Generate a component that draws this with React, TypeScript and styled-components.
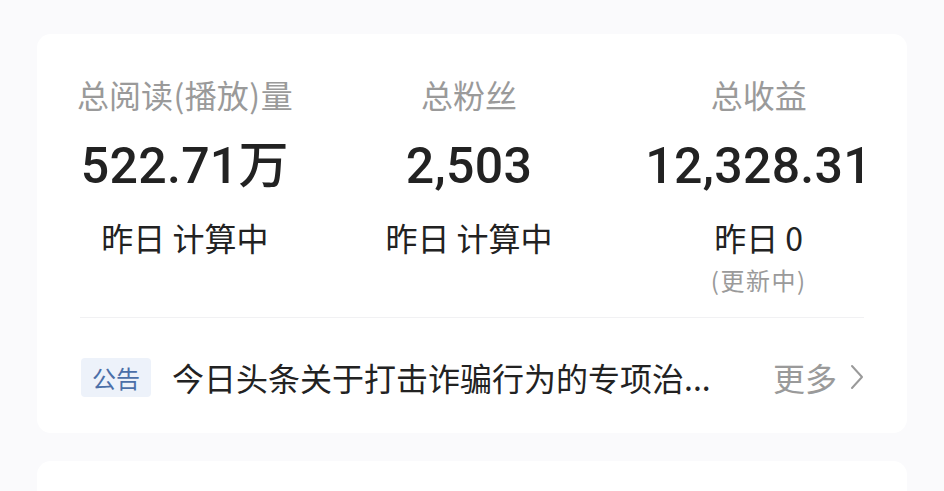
import React from "react";
import styled, { createGlobalStyle } from "styled-components";

const GlobalStyle = createGlobalStyle`
  html, body { margin: 0; padding: 0; background: #fafafc; }
  body { font-family: "Noto Sans CJK SC", "Noto Sans", sans-serif; }
`;

const Page = styled.div`
  width: 944px;
  height: 491px;
  overflow: hidden;
  box-sizing: border-box;
  padding: 34px 37px 0;
  display: flex;
  flex-direction: column;
  gap: 28px;
`;

const Card = styled.section`
  background: #ffffff;
  border-radius: 14px;
  padding: 40px 43px 36px;
  display: flex;
  flex-direction: column;
`;

const StatsRow = styled.div`
  display: flex;
  justify-content: space-between;
  align-items: flex-start;
  margin: 0 -8px 0 -3px;
`;

const Stat = styled.div`
  display: flex;
  flex-direction: column;
  align-items: center;
  text-align: center;
`;

const Label = styled.div`
  font-size: 32px;
  line-height: 40px;
  color: #9a9a9a;
`;

const Paren = styled.span`
  margin: 0 0.5px;
`;

const Value = styled.div`
  margin-top: 22px;
  font-family: Roboto, "Noto Sans CJK SC", sans-serif;
  font-weight: 500;
  font-size: 50px;
  line-height: 60px;
  color: #222222;
  letter-spacing: 0.3px;
`;

const Sub = styled.div`
  margin-top: 21px;
  font-size: 32px;
  line-height: 40px;
  color: #222222;
`;

const SubNote = styled.div`
  margin-top: 7px;
  font-size: 24px;
  line-height: 32px;
  color: #9a9a9a;
  letter-spacing: 1.5px;
`;

const Divider = styled.div`
  margin-top: 21px;
  height: 1px;
  background: #f1f1f3;
`;

const NoticeRow = styled.div`
  margin-top: 39px;
  height: 40px;
  display: flex;
  align-items: center;
`;

const Badge = styled.span`
  flex: none;
  margin-left: 1px;
  height: 39px;
  padding: 0 11px;
  border-radius: 4px;
  background: #edf2fa;
  color: #4b6fa8;
  font-size: 24px;
  line-height: 39px;
`;

const NoticeText = styled.div`
  flex: none;
  margin-left: 21px;
  font-size: 32px;
  line-height: 40px;
  color: #222222;
  white-space: nowrap;
`;

const More = styled.div`
  flex: none;
  margin-left: auto;
  display: flex;
  align-items: center;
  gap: 13px;
  font-size: 32px;
  line-height: 40px;
  color: #9a9a9a;
`;

export default function App() {
  return (
    <>
      <GlobalStyle />
      <Page>
        <Card>
          <StatsRow>
            <Stat>
              <Label>
                总阅读<Paren>(</Paren>播放<Paren>)</Paren>量
              </Label>
              <Value>522.71万</Value>
              <Sub>昨日 计算中</Sub>
            </Stat>
            <Stat>
              <Label>总粉丝</Label>
              <Value>2,503</Value>
              <Sub>昨日 计算中</Sub>
            </Stat>
            <Stat>
              <Label>总收益</Label>
              <Value>12,328.31</Value>
              <Sub>昨日 0</Sub>
              <SubNote>(更新中)</SubNote>
            </Stat>
          </StatsRow>
          <Divider />
          <NoticeRow>
            <Badge>公告</Badge>
            <NoticeText>今日头条关于打击诈骗行为的专项治...</NoticeText>
            <More>
              更多
              <svg width="14" height="26" viewBox="0 0 14 26" fill="none">
                <polyline
                  points="2,2 12,13 2,24"
                  stroke="#9a9a9a"
                  strokeWidth="2"
                  strokeLinecap="round"
                  strokeLinejoin="round"
                />
              </svg>
            </More>
          </NoticeRow>
        </Card>
        <Card />
      </Page>
    </>
  );
}
